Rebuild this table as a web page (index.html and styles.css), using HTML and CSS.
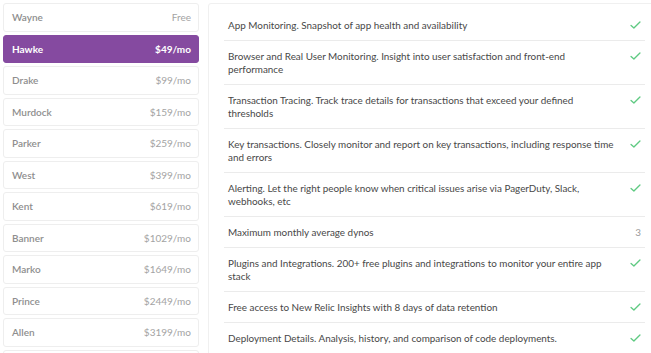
FILE: index.html
```html
<!DOCTYPE html>
<html>
<head>
<meta charset="utf-8">
<link rel="stylesheet" href="styles.css">
</head>
<body>
<div class="page">
  <ul class="plans">
    <li class="plan"><span class="name">Wayne</span><span class="price">Free</span></li>
    <li class="plan active"><span class="name">Hawke</span><span class="price">$49/mo</span></li>
    <li class="plan"><span class="name">Drake</span><span class="price">$99/mo</span></li>
    <li class="plan"><span class="name">Murdock</span><span class="price">$159/mo</span></li>
    <li class="plan"><span class="name">Parker</span><span class="price">$259/mo</span></li>
    <li class="plan"><span class="name">West</span><span class="price">$399/mo</span></li>
    <li class="plan"><span class="name">Kent</span><span class="price">$619/mo</span></li>
    <li class="plan"><span class="name">Banner</span><span class="price">$1029/mo</span></li>
    <li class="plan"><span class="name">Marko</span><span class="price">$1649/mo</span></li>
    <li class="plan"><span class="name">Prince</span><span class="price">$2449/mo</span></li>
    <li class="plan"><span class="name">Allen</span><span class="price">$3199/mo</span></li>
    <li class="plan"><span class="name">&nbsp;</span><span class="price">&nbsp;</span></li>
  </ul>
  <div class="card">
    <ul class="features">
      <li class="feature"><span class="text">App Monitoring. Snapshot of app health and availability</span><span class="val"><svg class="check" viewBox="0 0 12 9"><path d="M1 5 L4.2 7.8 L11 1.2"/></svg></span></li>
      <li class="feature"><span class="text">Browser and Real User Monitoring. Insight into user satisfaction and front-end performance</span><span class="val"><svg class="check" viewBox="0 0 12 9"><path d="M1 5 L4.2 7.8 L11 1.2"/></svg></span></li>
      <li class="feature"><span class="text">Transaction Tracing. Track trace details for transactions that exceed your defined thresholds</span><span class="val"><svg class="check" viewBox="0 0 12 9"><path d="M1 5 L4.2 7.8 L11 1.2"/></svg></span></li>
      <li class="feature"><span class="text">Key transactions. Closely monitor and report on key transactions, including response time and errors</span><span class="val"><svg class="check" viewBox="0 0 12 9"><path d="M1 5 L4.2 7.8 L11 1.2"/></svg></span></li>
      <li class="feature"><span class="text">Alerting. Let the right people know when critical issues arise via PagerDuty, Slack, webhooks, etc</span><span class="val"><svg class="check" viewBox="0 0 12 9"><path d="M1 5 L4.2 7.8 L11 1.2"/></svg></span></li>
      <li class="feature"><span class="text">Maximum monthly average dynos</span><span class="val num">3</span></li>
      <li class="feature"><span class="text">Plugins and Integrations. 200+ free plugins and integrations to monitor your entire app stack</span><span class="val"><svg class="check" viewBox="0 0 12 9"><path d="M1 5 L4.2 7.8 L11 1.2"/></svg></span></li>
      <li class="feature"><span class="text">Free access to New Relic Insights with 8 days of data retention</span><span class="val"><svg class="check" viewBox="0 0 12 9"><path d="M1 5 L4.2 7.8 L11 1.2"/></svg></span></li>
      <li class="feature"><span class="text">Deployment Details. Analysis, history, and comparison of code deployments.</span><span class="val"><svg class="check" viewBox="0 0 12 9"><path d="M1 5 L4.2 7.8 L11 1.2"/></svg></span></li>
      <li class="feature"><span class="text">&nbsp;</span><span class="val"></span></li>
    </ul>
  </div>
</div>
</body>
</html>
```

FILE: styles.css
```css
html, body {
  margin: 0;
  padding: 0;
  background: #ffffff;
  overflow: hidden;
}
body {
  font-family: Lato, "Liberation Sans", sans-serif;
  width: 651px;
  height: 353px;
}
.page {
  display: flex;
  align-items: flex-start;
  gap: 9px;
  padding: 3px 0 0 3px;
}
.plans {
  list-style: none;
  margin: 0;
  padding: 0;
  width: 196px;
  flex: none;
  display: flex;
  flex-direction: column;
  gap: 3px;
}
.plan {
  box-sizing: border-box;
  height: 28.5px;
  border: 1px solid #eeeeee;
  border-radius: 3px;
  display: flex;
  align-items: center;
  justify-content: space-between;
  padding: 0 7px 0 8px;
  font-size: 10px;
  color: #a3a3a3;
}
.plan .name {
  font-weight: 600;
  color: #8e8e8e;
}
.plan.active {
  background: #854aa0;
  border-color: #854aa0;
  color: #ffffff;
}
.plan.active .name,
.plan.active .price {
  color: #ffffff;
  font-weight: 700;
}
.card {
  box-sizing: border-box;
  width: 453px;
  flex: none;
  border: 1px solid #f0f0f0;
  border-radius: 3px;
  padding: 6px 15px 0 15px;
}
.features {
  list-style: none;
  margin: 0;
  padding: 0;
}
.feature {
  display: flex;
  align-items: flex-start;
  justify-content: space-between;
  gap: 11px;
  padding: 8.5px 4px 8.5px 4px;
  border-bottom: 1px solid #ebebeb;
  font-size: 9.9px;
  line-height: 13px;
  color: #474747;
}
.feature .text {
  flex: 1;
}
.feature .val {
  flex: none;
  width: 12px;
  display: flex;
  justify-content: flex-end;
  padding-top: 2px;
}
.feature .num {
  padding-top: 0;
  color: #9a9a9a;
}
.check {
  width: 11px;
  height: 8px;
  fill: none;
  stroke: #5fca82;
  stroke-width: 1.5;
  stroke-linecap: round;
  stroke-linejoin: round;
}
```
